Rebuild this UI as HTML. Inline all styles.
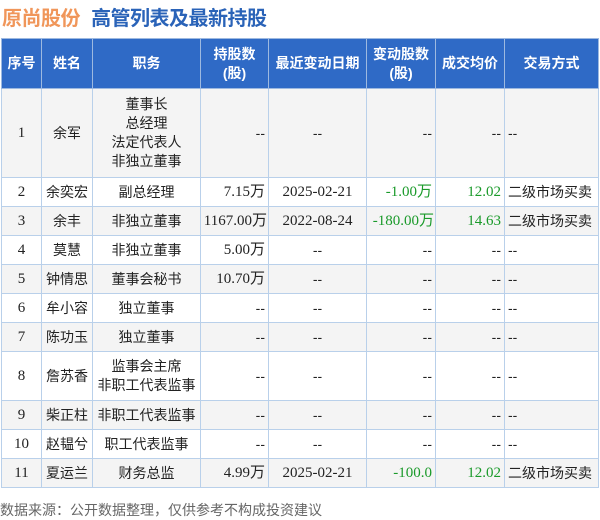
<!DOCTYPE html><html><head><meta charset="utf-8"><style>
body{margin:0;width:600px;height:519px;background:#fff;font-family:"Liberation Sans","Noto Sans CJK SC",sans-serif;position:relative;overflow:hidden}
.t{position:absolute;left:2px;top:2px;font-size:20px;font-weight:bold;letter-spacing:-0.5px}
table{position:absolute;left:1px;top:38px;border-collapse:collapse;width:597px;table-layout:fixed;font-size:14px;color:#222}
td,th{border:1px solid #b9d0ea;padding:0 3px;text-align:center;line-height:19px;white-space:nowrap}
th{background:#2f6ac6;color:#fff;font-weight:bold;height:49px;border-color:#9db9e0;font-size:14px}
tr:nth-child(even) td{background:#f4f4f4}
.n{font-family:"Liberation Serif","Noto Sans CJK SC",serif;font-size:15px}
.r{text-align:right}.l{text-align:left}.g{color:#1a9a2a}
.f{position:absolute;left:0px;top:500px;font-size:14px;color:#666}
</style></head><body>
<div class="t"><span style="color:#f0965a">原尚股份</span> <span style="color:#2a63b8;margin-left:6px">高管列表及最新持股</span></div>
<table>
<colgroup><col style="width:40px"><col style="width:51px"><col style="width:108px"><col style="width:68px"><col style="width:98px"><col style="width:69px"><col style="width:69px"><col style="width:94px"></colgroup>
<tr><th>序号</th><th>姓名</th><th>职务</th><th>持股数<br>(股)</th><th>最近变动日期</th><th>变动股数<br>(股)</th><th>成交均价</th><th>交易方式</th></tr>
<tr style="height:89px"><td class="n">1</td><td>余军</td><td>董事长<br>总经理<br>法定代表人<br>非独立董事</td><td class="r">--</td><td>--</td><td class="r">--</td><td class="r">--</td><td class="l">--</td></tr>
<tr style="height:29px"><td class="n">2</td><td>余奕宏</td><td>副总经理</td><td class="r n">7.15万</td><td class="n">2025-02-21</td><td class="r n g">-1.00万</td><td class="r n g">12.02</td><td class="l">二级市场买卖</td></tr>
<tr style="height:29px"><td class="n">3</td><td>余丰</td><td>非独立董事</td><td class="r n" style="padding:0 1px">1167.00万</td><td class="n">2022-08-24</td><td class="r n g" style="padding:0 1px">-180.00万</td><td class="r n g">14.63</td><td class="l">二级市场买卖</td></tr>
<tr style="height:29px"><td class="n">4</td><td>莫慧</td><td>非独立董事</td><td class="r n">5.00万</td><td>--</td><td class="r">--</td><td class="r">--</td><td class="l">--</td></tr>
<tr style="height:29px"><td class="n">5</td><td>钟情思</td><td>董事会秘书</td><td class="r n">10.70万</td><td>--</td><td class="r">--</td><td class="r">--</td><td class="l">--</td></tr>
<tr style="height:29px"><td class="n">6</td><td>牟小容</td><td>独立董事</td><td class="r">--</td><td>--</td><td class="r">--</td><td class="r">--</td><td class="l">--</td></tr>
<tr style="height:29px"><td class="n">7</td><td>陈功玉</td><td>独立董事</td><td class="r">--</td><td>--</td><td class="r">--</td><td class="r">--</td><td class="l">--</td></tr>
<tr style="height:49px"><td class="n">8</td><td>詹苏香</td><td>监事会主席<br>非职工代表监事</td><td class="r">--</td><td>--</td><td class="r">--</td><td class="r">--</td><td class="l">--</td></tr>
<tr style="height:29px"><td class="n">9</td><td>柴正柱</td><td>非职工代表监事</td><td class="r">--</td><td>--</td><td class="r">--</td><td class="r">--</td><td class="l">--</td></tr>
<tr style="height:29px"><td class="n">10</td><td>赵韫兮</td><td>职工代表监事</td><td class="r">--</td><td>--</td><td class="r">--</td><td class="r">--</td><td class="l">--</td></tr>
<tr style="height:29px"><td class="n">11</td><td>夏运兰</td><td>财务总监</td><td class="r n">4.99万</td><td class="n">2025-02-21</td><td class="r n g">-100.0</td><td class="r n g">12.02</td><td class="l">二级市场买卖</td></tr>
</table>
<div class="f">数据来源：公开数据整理，仅供参考不构成投资建议</div>
</body></html>
